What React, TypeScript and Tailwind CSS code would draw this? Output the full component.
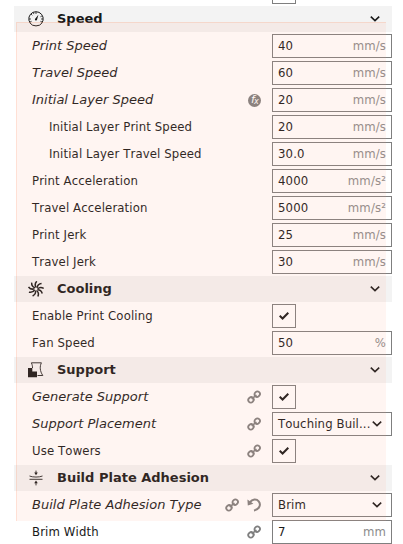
import React from "react";

const Chevron = () => (
  <svg width="10" height="6" viewBox="0 0 10 6" fill="none" stroke="#191919" strokeWidth="1.6" className="shrink-0">
    <path d="M0.8 0.7 5 4.6 9.2 0.7" />
  </svg>
);

const Link = () => (
  <svg width="14" height="14" viewBox="0 0 14 14" fill="none" stroke="#7f7f7f" strokeWidth="1.8" className="shrink-0">
    <rect x="1.2" y="7.3" width="5.6" height="5" rx="2.5" transform="rotate(-45 4 9.8)" />
    <rect x="7.4" y="1.7" width="5.6" height="5" rx="2.5" transform="rotate(-45 10.2 4.2)" />
    <path d="M4.8 9.1 9.4 4.9" strokeWidth="1.6" />
  </svg>
);

const Revert = () => (
  <svg width="14" height="14" viewBox="0 0 14 14" fill="none" stroke="#7f7f7f" strokeWidth="2" className="shrink-0">
    <path d="M3 4.2C5.3 1 9.6 .8 11.7 3.3 14.2 6.4 12.6 11.4 7 12.6" />
    <path d="M.4 1.6.8 7.4 6.4 5.8Z" fill="#7f7f7f" stroke="none" />
  </svg>
);

const Formula = () => (
  <span className="relative h-[13px] w-[13px] rounded-full bg-[#7f7f7f] font-['DejaVu_Sans'] leading-none text-white italic">
    <span className="absolute top-0 left-[3px] text-[11px] leading-[11px]">f</span>
    <span className="absolute top-[4px] left-[6px] text-[8px] leading-[8px]">x</span>
  </span>
);

const icons = {
  speed: (
    <svg width="16" height="16" viewBox="0 0 16 16" fill="none" stroke="#191919" strokeWidth="1">
      <path d="M4.5 14.2A7.2 7.2 0 1 1 11.5 14.2Q8 15.6 4.5 14.2Z" />
      <path d="M8 1v2M1 8h2M13 8h2M3 3l1.3 1.3M2 11l1.6-.7M14 11l-1.6-.7M5.3 1.6l.6 1.5M13.8 5.2l-1.4.6" strokeWidth=".8" />
      <path d="M10.4 3.8 9.1 8.4A1.1 1.1 0 1 1 7.4 7.5Z" fill="#191919" stroke="none" />
    </svg>
  ),
  cooling: (
    <svg width="16" height="16" viewBox="0 0 16 16" fill="none" stroke="#191919" strokeWidth="1.5">
      {[0, 40, 80, 120, 160, 200, 240, 280, 320].map((a) => (
        <path key={a} d="M8 6.4C6.9 4.6 7 2.2 8.8 .3" transform={`rotate(${a} 8 8)`} />
      ))}
    </svg>
  ),
  support: (
    <svg width="16" height="16" viewBox="0 0 16 16" fill="none">
      <path d="M0 6h4.3V9.5H9V15.2H0Z" fill="#191919" />
      <path d="M3.4 .8H13.4C11.6 4.2 11.8 9.2 14.8 13.5H9.5M3.4 .8C4.3 3 4.6 4.4 4.5 6" stroke="#191919" strokeWidth=".9" />
    </svg>
  ),
  adhesion: (
    <svg width="16" height="16" viewBox="0 0 16 16" fill="none" stroke="#191919" strokeWidth=".9">
      <path d="M1.5 6C4.5 7.4 11.5 7.4 14.5 6M1.5 9.3H14.5M8 .6V3M8 12V15.4" />
      <path d="M6.2 2.6h3.6L8 5.3ZM6.2 13.3h3.6L8 10.6Z" fill="#191919" stroke="none" />
    </svg>
  ),
};

function Header({ title, icon }: { title: string; icon: keyof typeof icons }) {
  return (
    <div className="ml-[14px] flex h-[26px] w-[378px] items-center bg-[#f3f3f3] pr-3 pl-[14px]">
      {icons[icon]}
      <h2 className="ml-[13px] flex-1 font-['DejaVu_Sans'] text-[13px] leading-4 font-bold whitespace-nowrap">{title}</h2>
      <Chevron />
    </div>
  );
}

type RowProps = {
  label: string;
  italic?: boolean;
  indent?: boolean;
  marks?: React.ReactNode;
  value?: string;
  unit?: string;
  select?: boolean;
};

function Row({ label, italic, indent, marks, value, unit, select }: RowProps) {
  return (
    <div className="flex h-[26px] items-center pl-8">
      <div className={`flex w-[240px] items-center pr-[11px] ${indent ? "pl-[17px]" : ""}`}>
        <span
          className={`flex-1 text-[13px] leading-4 whitespace-nowrap ${italic ? "font-['DejaVu_Sans'] italic" : "font-['DejaVu_Sans_Condensed'] tracking-[0.13px]"}`}
        >
          {label}
        </span>
        <span className="flex items-center gap-2">{marks}</span>
      </div>
      {value === undefined ? (
        <div className="flex h-6 w-6 items-center justify-center border border-[#7f7f7f]">
          <svg width="10" height="8" viewBox="0 0 10 8" fill="none" stroke="#191919" strokeWidth="2">
            <path d="M.7 3.8 3.6 6.5 9.3 .8" />
          </svg>
        </div>
      ) : (
        <div
          className={`flex h-6 w-[120px] items-center justify-between border border-[#7f7f7f] pl-[5px] font-['DejaVu_Sans_Condensed'] text-[13px] leading-4 tracking-[0.13px] ${select ? "pr-[9px]" : "pr-[5px]"}`}
        >
          <span className="whitespace-nowrap">{value}</span>
          {select ? <Chevron /> : <span className="text-[#8c8c8c]">{unit}</span>}
        </div>
      )}
    </div>
  );
}

export default function App() {
  return (
    <div className="relative h-[544px] w-[403px] overflow-hidden bg-white font-['DejaVu_Sans',sans-serif] text-[#191919] [font-kerning:none]">
      <div className="flex flex-col gap-px">
        <div className="h-[5px] pl-[272px]">
          <div className="h-1 w-6 border border-t-0 border-[#7f7f7f]" />
        </div>
        <Header title="Speed" icon="speed" />
        <Row label="Print Speed" italic value="40" unit="mm/s" />
        <Row label="Travel Speed" italic value="60" unit="mm/s" />
        <Row label="Initial Layer Speed" italic marks={<Formula />} value="20" unit="mm/s" />
        <Row label="Initial Layer Print Speed" indent value="20" unit="mm/s" />
        <Row label="Initial Layer Travel Speed" indent value="30.0" unit="mm/s" />
        <Row label="Print Acceleration" value="4000" unit="mm/s²" />
        <Row label="Travel Acceleration" value="5000" unit="mm/s²" />
        <Row label="Print Jerk" value="25" unit="mm/s" />
        <Row label="Travel Jerk" value="30" unit="mm/s" />
        <Header title="Cooling" icon="cooling" />
        <Row label="Enable Print Cooling" />
        <Row label="Fan Speed" value="50" unit="%" />
        <Header title="Support" icon="support" />
        <Row label="Generate Support" italic marks={<Link />} />
        <Row label="Support Placement" italic marks={<Link />} value="Touching Buil..." select />
        <Row label="Use Towers" marks={<Link />} />
        <Header title="Build Plate Adhesion" icon="adhesion" />
        <Row label="Build Plate Adhesion Type" italic marks={<><Link /><Revert /></>} value="Brim" select />
        <Row label="Brim Width" marks={<Link />} value="7" unit="mm" />
      </div>
      <div className="pointer-events-none absolute top-[22px] left-4 h-[499px] w-[370px] border-t border-l border-[#ff6a30]/15 bg-[#ff9b7d]/10" />
    </div>
  );
}
